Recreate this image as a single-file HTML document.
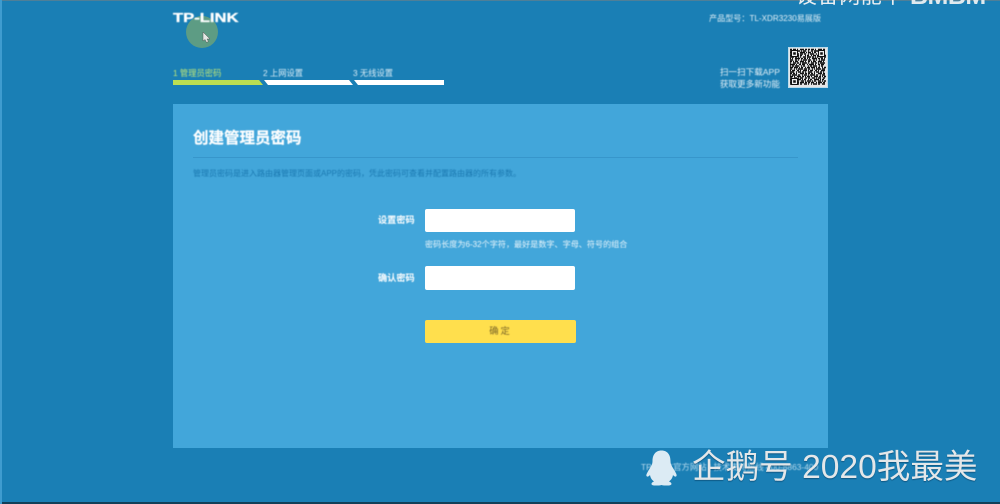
<!DOCTYPE html>
<html lang="zh">
<head>
<meta charset="utf-8">
<title>创建管理员密码</title>
<style>
html,body{margin:0;padding:0}
body{width:1000px;height:504px;overflow:hidden;position:relative;background:#1a7fb5;font-family:"Liberation Sans","Noto Sans CJK SC",sans-serif;color:#fff}
.a{position:absolute;white-space:nowrap}
.b{filter:blur(.45px)}
</style>
</head>
<body>
<div class="a" style="left:0;top:0;width:1000px;height:1px;background:#4f7f98"></div>
<div class="a" style="left:0;top:502px;width:1000px;height:2px;background:#123f58"></div>
<div class="a" style="left:0;top:0;width:2px;height:504px;background:#3f9ccf"></div>

<div class="a" style="left:186px;top:16px;width:32px;height:32px;border-radius:50%;background:#5d9c84"></div>
<div class="a b" style="left:173px;top:11px;font-size:12.5px;line-height:14px;font-weight:700;transform:scaleX(1.33);transform-origin:left;-webkit-text-stroke:.3px #fff">TP-LINK</div>
<svg class="a" style="left:202px;top:32px" width="9" height="11" viewBox="0 0 9 11"><path d="M1 0V9L3 7.5 4.5 10.5 6.500 9.5 5 7H8Z" fill="#e4e8e4" stroke="#555" stroke-width=".5"/></svg>

<div class="a b" style="left:173px;top:67px;font-size:8.300px;line-height:12px;color:#bde678">1 管理员密码</div>
<div class="a b" style="left:263px;top:67px;font-size:8.300px;line-height:12px;color:#d8ecf6">2 上网设置</div>
<div class="a b" style="left:353px;top:67px;font-size:8.300px;line-height:12px;color:#d8ecf6">3 无线设置</div>
<svg class="a" style="left:173px;top:80px" width="272" height="6" viewBox="0 0 272 6">
<path d="M0 0H86L90 5H0Z" fill="#bbde52"/>
<path d="M91 0H176L180 5H95Z" fill="#fff"/>
<path d="M181 0H271V5H185Z" fill="#fff"/>
</svg>

<div class="a" style="left:796px;top:0;width:204px;height:8px;overflow:hidden">
<div class="a" style="left:0;top:-14px;font-size:21px;line-height:22px;color:#e8eef2;letter-spacing:.6px">设备网能中</div>
<div class="a" style="left:114px;top:-16px;font-size:25px;line-height:24px;font-weight:700;color:#dfe9ee;letter-spacing:-.5px">BMBM</div>
</div>

<div class="a b" style="left:709px;top:13px;font-size:8.100px;line-height:12px;color:#e2f0f7">产品型号：TL-XDR3230易展版</div>
<div class="a b" style="right:220px;top:66px;font-size:8.600px;line-height:12px;color:#e2f0f7;text-align:right">扫一扫下载APP<br>获取更多新功能</div>

<svg class="a" style="left:788px;top:47px;filter:blur(.35px)" width="40" height="41" viewBox="0 0 40 41">
<rect width="40" height="41" fill="#bcdcec"/>
<rect x="1" y="1" width="38" height="39" fill="#e6e6e6"/>
<g fill="none" stroke="#111" stroke-width="1.500">
<path stroke-dasharray="2 1 3 1 1 2 4 1 2 1" d="M2 2.500H38"/>
<path stroke-dasharray="1 2 2 1 4 1 1 1 3 2" d="M2 4H38"/>
<path stroke-dasharray="3 1 1 1 2 2 5 1 1 1" d="M2 5.500H38"/>
<path stroke-dasharray="1 1 4 2 1 1 3 1 2 2" d="M2 7H38"/>
<path stroke-dasharray="2 2 1 1 3 1 2 3 1 1" d="M2 8.500H38"/>
<path stroke-dasharray="4 1 2 1 1 1 1 2 3 1" d="M2 10H38"/>
<path stroke-dasharray="1 1 1 2 5 1 2 1 2 1" d="M2 11.500H38"/>
<path stroke-dasharray="3 2 2 1 1 2 1 1 4 1" d="M2 13H38"/>
<path stroke-dasharray="2 1 1 1 3 2 4 1 1 2" d="M2 14.500H38"/>
<path stroke-dasharray="1 2 3 1 2 1 1 1 5 1" d="M2 16H38"/>
<path stroke-dasharray="5 1 1 2 2 1 3 2 1 1" d="M2 17.500H38"/>
<path stroke-dasharray="1 1 2 1 4 2 1 1 2 3" d="M2 19H38"/>
<path stroke-dasharray="3 1 4 1 1 1 2 2 1 1" d="M2 20.500H38"/>
<path stroke-dasharray="2 2 1 1 1 1 5 1 3 1" d="M2 22H38"/>
<path stroke-dasharray="1 1 3 2 2 1 1 2 4 1" d="M2 23.500H38"/>
<path stroke-dasharray="4 2 1 1 3 1 2 1 1 2" d="M2 25H38"/>
<path stroke-dasharray="2 1 2 1 1 3 4 1 2 1" d="M2 26.500H38"/>
<path stroke-dasharray="1 1 5 1 2 2 1 1 3 1" d="M2 28H38"/>
<path stroke-dasharray="3 1 1 2 4 1 2 1 1 1" d="M2 29.500H38"/>
<path stroke-dasharray="2 2 3 1 1 1 3 2 2 1" d="M2 31H38"/>
<path stroke-dasharray="1 1 2 2 5 1 1 1 2 2" d="M2 32.500H38"/>
<path stroke-dasharray="4 1 1 1 2 2 3 1 1 1" d="M2 34H38"/>
<path stroke-dasharray="2 1 3 2 1 1 4 1 2 1" d="M2 35.500H38"/>
<path stroke-dasharray="1 2 1 1 4 1 2 2 3 1" d="M2 37H38"/>
</g>
<path fill="#111" d="M3 3h7v7H3zM30 3h7v7h-7zM3 31h7v7H3z"/>
<path fill="#eee" d="M4 4h5v5H4zM31 4h5v5h-5zM4 32h5v5H4z"/>
<path fill="#111" d="M5.200 5.200h2.600v2.600H5.200zM32.200 5.200h2.600v2.600h-2.600zM5.200 33.200h2.600v2.600H5.200z"/>
</svg>

<div class="a" style="left:173px;top:104px;width:655px;height:344px;background:#42a6da"></div>
<div class="a b" style="left:193px;top:129px;font-size:15.500px;line-height:20px;font-weight:700;color:#fff;-webkit-text-stroke:.2px #fff">创建管理员密码</div>
<div class="a" style="left:193px;top:157px;width:605px;height:1px;background:#3796cb"></div>
<div class="a b" style="left:193px;top:168px;font-size:8px;line-height:12px;color:#1a78b0">管理员密码是进入路由器管理页面或APP的密码，凭此密码可查看并配置路由器的所有参数。</div>

<div class="a b" style="left:378px;top:214px;font-size:9.200px;line-height:12px;font-weight:700;color:#fff">设置密码</div>
<div class="a" style="left:425px;top:209px;width:150px;height:23px;background:#fff;border-radius:2px"></div>
<div class="a b" style="left:425px;top:239px;font-size:8.100px;line-height:12px;color:#eaf6fc">密码长度为6-32个字符，最好是数字、字母、符号的组合</div>

<div class="a b" style="left:378px;top:272px;font-size:9.200px;line-height:12px;font-weight:700;color:#fff">确认密码</div>
<div class="a" style="left:425px;top:266px;width:150px;height:24px;background:#fff;border-radius:2px"></div>

<div class="a" style="left:425px;top:320px;width:151px;height:23px;background:#ffdf4d;border-radius:2px"></div>
<div class="a b" style="left:425px;top:325px;width:151px;text-align:center;font-size:9.300px;line-height:13px;color:#7a6528;letter-spacing:2px">确定</div>

<div class="a b" style="left:641px;top:461px;font-size:8.400px;line-height:12px;color:#b8dcee">TP-LINK官方网站 | 技术支持热线 400-8863-400</div>

<svg class="a" style="left:645px;top:450px" width="33" height="36" viewBox="0 0 33 36">
<path d="M16.500 0.500C10 0.500 7.500 5.500 7.500 11C7.500 14 6.500 15.500 5 18C3 21.500 0 25.500 2 26.500C3.500 27 4.500 25.500 5 25C5.500 28 7 30 9 31.500C6 32.500 5 35.500 10 35.500H14C15.500 35.500 16 35 16.500 35C17 35 17.500 35.500 19 35.500H23C28 35.500 27 32.500 24 31.500C26 30 27.500 28 28 25C28.500 25.500 29.500 27 31 26.500C33 25.500 30 21.500 28 18C26.500 15.500 25.500 14 25.500 11C25.500 5.500 23 0.500 16.500 0.500Z" fill="#dcebf4"/>
</svg>
<div class="a" style="left:692px;top:448px;font-size:33.600px;line-height:40px;color:#e4e7e9;text-shadow:0 1px 1px rgba(0,40,70,.45)">企鹅号 2020我最美</div>
</body>
</html>
